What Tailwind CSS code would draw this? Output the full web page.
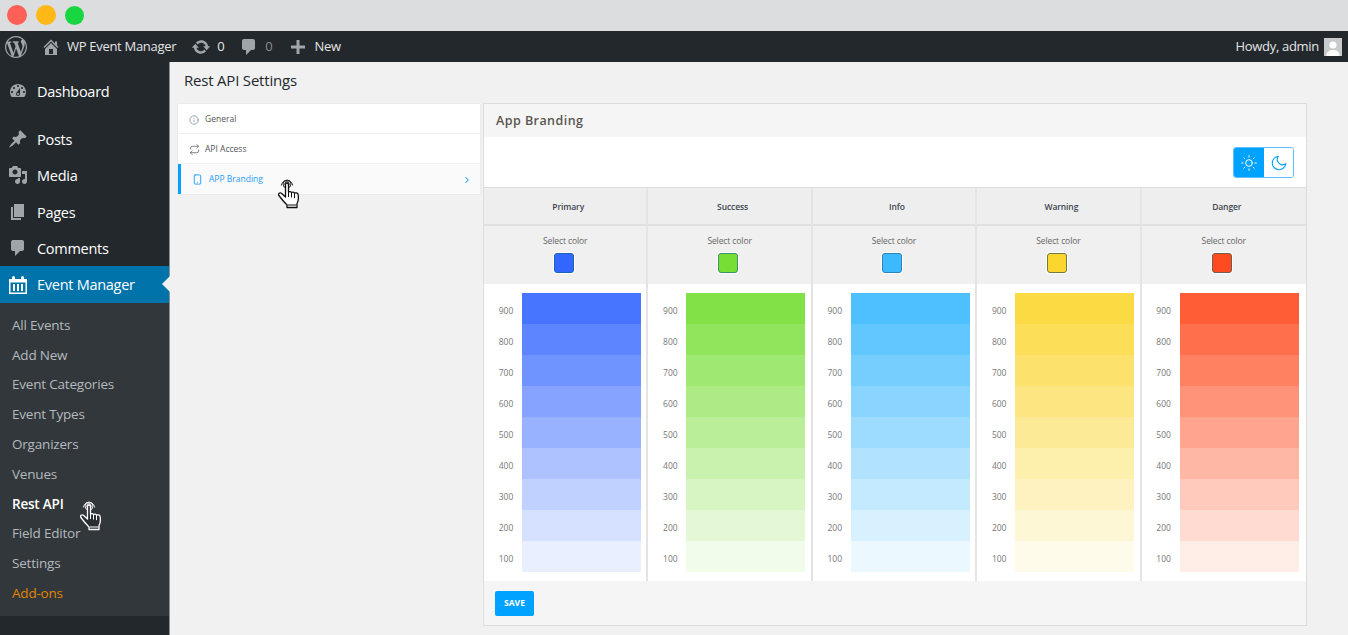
<!DOCTYPE html>
<html lang="en">
<head>
<meta charset="UTF-8">
<title>Rest API Settings</title>
<script src="https://cdn.jsdelivr.net/npm/@tailwindcss/browser@4"></script>
</head>
<body class="h-[635px] overflow-hidden bg-[#f1f1f1] font-['Open_Sans',sans-serif] text-[#444]">
<!-- window chrome -->
<div class="h-[31px] bg-[#dcddde] flex items-center gap-[9px] pl-[7px] pb-[1px]">
  <span class="w-5 h-5 rounded-full bg-[#fe5f57]"></span>
  <span class="w-5 h-5 rounded-full bg-[#ffb815]"></span>
  <span class="w-[19px] h-[19px] rounded-full bg-[#17d63f]"></span>
</div>
<!-- admin bar -->
<div class="h-[31px] bg-[#23282d] flex items-center text-[13px] tracking-[-0.3px] text-[#e4e5e6] pl-[5px] pr-[6px]">
  <svg class="w-[22px] h-[22px] fill-[#a0a5aa]" viewBox="0 0 20 20"><path d="M20 10c0-5.51-4.49-10-10-10C4.48 0 0 4.49 0 10c0 5.52 4.48 10 10 10 5.51 0 10-4.48 10-10zM7.78 15.37L4.37 6.22c.55-.02 1.17-.08 1.17-.08.5-.06.44-1.13-.06-1.11 0 0-1.45.11-2.37.11-.18 0-.37 0-.58-.01C4.12 2.69 6.87 1.11 10 1.11c2.33 0 4.45.87 6.05 2.34-.68-.11-1.65.39-1.65 1.58 0 .74.45 1.36.9 2.1.35.61.55 1.36.55 2.46 0 1.49-1.4 5-1.4 5l-3.03-8.37c.54-.02.82-.17.82-.17.5-.05.44-1.25-.06-1.22 0 0-1.44.12-2.38.12-.87 0-2.33-.12-2.33-.12-.5-.03-.56 1.2-.06 1.22l.92.08 1.26 3.41zM17.41 10c.24-.64.74-1.87.43-4.25.7 1.29 1.05 2.71 1.05 4.25 0 3.29-1.73 6.24-4.4 7.78.97-2.59 1.94-5.2 2.92-7.78zM6.1 18.09C3.12 16.65 1.11 13.53 1.11 10c0-1.3.23-2.48.72-3.59C3.25 10.3 4.67 14.2 6.1 18.09zm4.03-6.63l2.58 6.98c-.86.29-1.76.45-2.71.45-.79 0-1.57-.11-2.29-.33.81-2.38 1.62-4.74 2.42-7.1z"/></svg>
  <svg class="w-5 h-5 ml-[14px] fill-[#a0a5aa]" viewBox="0 0 20 20"><path d="M16 8.5l1.53 1.53-1.06 1.06L10 4.62l-6.47 6.47-1.06-1.06L10 2.5l4 4v-2h2v4zm-6-2.46l6 5.99V18H4v-5.97zM12 17v-5H8v5h4z"/></svg>
  <span class="ml-[6px]">WP Event Manager</span>
  <svg class="w-5 h-5 ml-[15px] fill-[#a0a5aa]" viewBox="0 0 20 20"><path d="M10.2 3.28c3.53 0 6.43 2.61 6.92 6h2.08l-3.5 4-3.5-4h2.32c-.45-1.97-2.21-3.45-4.32-3.45-1.45 0-2.73.71-3.54 1.78L4.95 5.66C6.23 4.2 8.11 3.28 10.2 3.28zm-.4 13.44c-3.52 0-6.43-2.61-6.92-6H.8l3.5-4c1.17 1.33 2.33 2.67 3.5 4H5.48c.45 1.97 2.21 3.45 4.32 3.45 1.45 0 2.73-.71 3.54-1.78l1.71 1.95c-1.28 1.46-3.15 2.38-5.25 2.38z"/></svg>
  <span class="ml-[6px]">0</span>
  <svg class="w-5 h-5 ml-[15px] fill-[#a0a5aa]" viewBox="0 0 20 20"><path d="M5 2h9c1.1 0 2 .9 2 2v7c0 1.1-.9 2-2 2h-2l-5 5v-5H5c-1.1 0-2-.9-2-2V4c0-1.1.9-2 2-2z"/></svg>
  <span class="ml-[6px] text-[#8a8f94]">0</span>
  <svg class="w-5 h-5 ml-[16px] fill-[#a0a5aa]" viewBox="0 0 20 20"><path d="M17 8.5v3h-5.5V17h-3v-5.5H3v-3h5.5V3h3v5.5z"/></svg>
  <span class="ml-[6px]">New</span>
  <span class="ml-auto">Howdy, admin</span>
  <span class="ml-[5px] w-[18px] h-[18px] bg-[#c9cacb] flex items-end justify-center overflow-hidden">
    <svg class="w-[16px] h-[16px] fill-white" viewBox="0 0 16 16"><circle cx="8" cy="5" r="3.6"/><path d="M1.5 16c0-4 2.5-6 6.5-6s6.5 2 6.5 6z"/></svg>
  </span>
</div>
<div class="flex h-[573px]">
  <!-- sidebar -->
  <aside class="w-[170px] shrink-0 bg-[#23282d] border-r border-[#8d8f91] text-white text-[14.5px] tracking-[-0.27px] flex flex-col">
    <a class="h-[36px] mt-[11px] flex items-center gap-[9px] pl-[8px]">
      <svg class="w-5 h-5 fill-[#a0a5aa]" viewBox="0 0 20 20"><path d="M3.76 16h12.48c1.1-1.37 1.76-3.11 1.76-5 0-4.42-3.58-8-8-8s-8 3.58-8 8c0 1.89.66 3.63 1.76 5zM10 4c.55 0 1 .45 1 1s-.45 1-1 1-1-.45-1-1 .45-1 1-1zM6 6c.55 0 1 .45 1 1s-.45 1-1 1-1-.45-1-1 .45-1 1-1zm8 0c.55 0 1 .45 1 1s-.45 1-1 1-1-.45-1-1 .45-1 1-1zm-5.37 5.55L12 7v6c0 1.1-.9 2-2 2s-2-.9-2-2c0-.57.24-1.08.63-1.45zM4 10c.55 0 1 .45 1 1s-.45 1-1 1-1-.45-1-1 .45-1 1-1zm12 0c.55 0 1 .45 1 1s-.45 1-1 1-1-.45-1-1 .45-1 1-1zm-5 3c0-.55-.45-1-1-1s-1 .45-1 1 .45 1 1 1 1-.45 1-1z"/></svg>
      <span class="pt-[2px]">Dashboard</span>
    </a>
    <a class="h-[36px] mt-[12px] flex items-center gap-[9px] pl-[8px]">
      <svg class="w-5 h-5 fill-[#a0a5aa]" viewBox="0 0 20 20"><path d="M10.44 3.02l1.82-1.82 6.36 6.35-1.83 1.82c-1.05-.68-2.48-.57-3.41.36l-.75.75c-.92.93-1.04 2.35-.35 3.41l-1.83 1.82-2.41-2.41-2.8 2.79c-.42.42-3.38 2.71-3.8 2.29s1.86-3.39 2.28-3.81l2.79-2.79L4.1 9.36l1.83-1.82c1.05.69 2.48.57 3.4-.36l.75-.75c.93-.92 1.05-2.35.36-3.41z"/></svg>
      <span class="pt-[2px]">Posts</span>
    </a>
    <a class="h-[36px] flex items-center gap-[9px] pl-[8px]">
      <svg class="w-5 h-5 fill-[#a0a5aa]" viewBox="0 0 20 20"><path d="M13 11V4c0-.55-.45-1-1-1h-1.67L9 1H5L3.67 3H2c-.55 0-1 .45-1 1v7c0 .55.45 1 1 1h10c.55 0 1-.45 1-1zM7 4.5c1.38 0 2.5 1.12 2.5 2.5S8.38 9.5 7 9.5 4.5 8.38 4.5 7 5.62 4.5 7 4.5zM14 6h5v10.5c0 1.38-1.12 2.5-2.5 2.5S14 17.88 14 16.5s1.12-2.5 2.5-2.5c.17 0 .34.02.5.05V9h-3V6zm-4 8.05V13h2v3.5c0 1.38-1.12 2.5-2.5 2.5S7 17.88 7 16.5 8.12 14 9.5 14c.17 0 .34.02.5.05z"/></svg>
      <span class="pt-[2px]">Media</span>
    </a>
    <a class="h-[36px] mt-[1px] flex items-center gap-[9px] pl-[8px]">
      <svg class="w-5 h-5 fill-[#a0a5aa]" viewBox="0 0 20 20"><path d="M6 15V2h10v13H6zm-1 1h8v2H3V5h2v11z"/></svg>
      <span class="pt-[2px]">Pages</span>
    </a>
    <a class="h-[36px] flex items-center gap-[9px] pl-[8px]">
      <svg class="w-5 h-5 fill-[#a0a5aa]" viewBox="0 0 20 20"><path d="M5 2h9c1.1 0 2 .9 2 2v7c0 1.1-.9 2-2 2h-2l-5 5v-5H5c-1.1 0-2-.9-2-2V4c0-1.1.9-2 2-2z"/></svg>
      <span class="pt-[2px]">Comments</span>
    </a>
    <a class="relative h-[37px] flex items-center gap-[9px] pl-[8px] bg-[#0073aa]">
      <svg class="w-5 h-5 fill-white" viewBox="0 0 20 20"><path fill-rule="evenodd" d="M1 4h3V2.5a1.5 1.5 0 0 1 3 0V4h6V2.5a1.5 1.5 0 0 1 3 0V4h3v15H1zM2.5 7.5V17.5h15V7.5zM5 9h2v7H5zM9 9h2v7H9zM13 9h2v7h-2z"/></svg>
      <span>Event Manager</span>
      <span class="absolute right-[-1px] top-[10px] w-0 h-0 border-y-[8px] border-y-transparent border-r-[8px] border-r-[#f1f1f1]"></span>
    </a>
    <ul class="bg-[#32373c] h-[313px] pt-[7px] text-[13.5px] tracking-[-0.2px] text-[#b4b9be]">
      <li class="h-[29.8px] pl-[12px] flex items-center">All Events</li>
      <li class="h-[29.8px] pl-[12px] flex items-center">Add New</li>
      <li class="h-[29.8px] pl-[12px] flex items-center">Event Categories</li>
      <li class="h-[29.8px] pl-[12px] flex items-center">Event Types</li>
      <li class="h-[29.8px] pl-[12px] flex items-center">Organizers</li>
      <li class="h-[29.8px] pl-[12px] flex items-center">Venues</li>
      <li class="h-[29.8px] pl-[12px] flex items-center font-semibold text-white">Rest API</li>
      <li class="h-[29.8px] pl-[12px] flex items-center">Field Editor</li>
      <li class="h-[29.8px] pl-[12px] flex items-center">Settings</li>
      <li class="h-[29.8px] pl-[12px] flex items-center text-[#e08500]">Add-ons</li>
    </ul>
  </aside>
  <!-- content -->
  <main class="flex-1 pl-[8px]">
    <h1 class="h-[41px] pl-[6px] pt-[7px] text-[15px] tracking-[-0.2px] leading-[22px] font-medium text-[#23282d]">Rest API Settings</h1>
    <div class="flex items-start gap-[3px]">
      <nav class="w-[302px] mt-[1px] text-[8.5px] text-[#555] shadow-[0_0_1px_#ccc]">
        <a class="h-[29px] pt-[2px] bg-white flex items-center pl-[11px] gap-[6px] mb-[1px]">
          <svg class="w-[10px] h-[10px] stroke-[#7d93a8] fill-none" stroke-width="2" viewBox="0 0 24 24" stroke-linecap="round"><circle cx="12" cy="12" r="10"/><path d="M12 16v-4M12 8h.01"/></svg>
          <span>General</span>
        </a>
        <a class="h-[29px] pt-[2px] bg-white flex items-center pl-[11px] gap-[5px] mb-[1px]">
          <svg class="w-[11px] h-[11px] stroke-[#777] fill-none" stroke-width="2" viewBox="0 0 24 24" stroke-linecap="round" stroke-linejoin="round"><path d="M17 1l4 4-4 4"/><path d="M3 11V9a4 4 0 0 1 4-4h14"/><path d="M7 23l-4-4 4-4"/><path d="M21 13v2a4 4 0 0 1-4 4H3"/></svg>
          <span>API Access</span>
        </a>
        <a class="h-[30px] pt-[1px] bg-[#fafafa] border-l-[3px] border-[#00a2ff] flex items-center pl-[11px] pr-[8px] gap-[6px] text-[#1e9dfb]">
          <svg class="w-[11px] h-[11px] stroke-[#1e9dfb] fill-none" stroke-width="2" viewBox="0 0 24 24" stroke-linecap="round" stroke-linejoin="round"><rect x="5" y="2" width="14" height="20" rx="2"/><path d="M12 18h.01"/></svg>
          <span class="font-medium">APP Branding</span>
          <svg class="ml-auto w-[10px] h-[10px] stroke-[#1e9dfb] fill-none" stroke-width="2.5" viewBox="0 0 24 24" stroke-linecap="round" stroke-linejoin="round"><path d="M9 18l6-6-6-6"/></svg>
        </a>
      </nav>
      <section class="w-[824px] h-[523px] border border-[#dcdcdc] flex flex-col">
        <h2 class="h-[33px] shrink-0 bg-[#f5f5f5] pl-[12px] pt-[1px] flex items-center text-[12.5px] font-semibold tracking-[0.45px] text-[#5a5550]">App Branding</h2>
        <div class="h-[51px] shrink-0 bg-white border-b border-[#dcdcdc] flex items-center justify-end pr-[12px] pt-[1px]">
          <div class="flex h-[31px] rounded-[3px] border border-[#5cbfff] overflow-hidden">
            <span class="w-[30px] bg-[#00a2ff] flex items-center justify-center">
              <svg class="w-4 h-4 stroke-white fill-none" stroke-width="1.5" viewBox="0 0 24 24" stroke-linecap="round"><circle cx="12" cy="12" r="5"/><path d="M12 1v2M12 21v2M4.22 4.22l1.42 1.42M18.36 18.36l1.42 1.42M1 12h2M21 12h2M4.22 19.78l1.42-1.42M18.36 5.64l1.42-1.42"/></svg>
            </span>
            <span class="w-[29px] bg-white flex items-center justify-center">
              <svg class="w-[18px] h-[18px] stroke-[#00a2ff] fill-none" stroke-width="1.5" viewBox="0 0 24 24" stroke-linejoin="round"><path d="M21 12.79A9 9 0 1 1 11.21 3 7 7 0 0 0 21 12.79z"/></svg>
            </span>
          </div>
        </div>
        <div class="grid grid-cols-5 h-[393px] shrink-0 bg-white">
          <!-- Primary -->
          <div class="border-r-2 border-[#e4e4e4]">
            <div class="h-[38px] pt-[3px] bg-[#eee] border-b-2 border-[#e0e0e0] flex items-center justify-center pl-[6px] text-[8.5px] tracking-[-0.1px] font-semibold text-[#3f4650]">Primary</div>
            <div class="h-[58px] bg-[#f0f0f0] flex flex-col items-center gap-[5px] pt-[8px] text-[8.5px] tracking-[-0.1px] leading-[14px] text-[#666]">
              <span>Select color</span>
              <span class="w-[20px] h-[20px] mr-[3px] rounded-[3px] bg-[#3366ff] border border-[#1f63b5] shadow-[0_0_0_1px_#fff]"></span>
            </div>
            <div class="flex pl-[14px] pt-[9px] gap-[8px]">
              <ul class="w-[16px] pt-[3px] text-[8.5px] text-[#777] text-center">
                <li class="h-[31px] flex items-center justify-center">900</li><li class="h-[31px] flex items-center justify-center">800</li><li class="h-[31px] flex items-center justify-center">700</li><li class="h-[31px] flex items-center justify-center">600</li><li class="h-[31px] flex items-center justify-center">500</li><li class="h-[31px] flex items-center justify-center">400</li><li class="h-[31px] flex items-center justify-center">300</li><li class="h-[31px] flex items-center justify-center">200</li><li class="h-[31px] flex items-center justify-center">100</li>
              </ul>
              <div class="w-[119px]">
                <div class="h-[31px] bg-[#3366ff]/90"></div><div class="h-[31px] bg-[#3366ff]/80"></div><div class="h-[31px] bg-[#3366ff]/70"></div><div class="h-[31px] bg-[#3366ff]/60"></div><div class="h-[31px] bg-[#3366ff]/50"></div><div class="h-[31px] bg-[#3366ff]/40"></div><div class="h-[31px] bg-[#3366ff]/30"></div><div class="h-[31px] bg-[#3366ff]/20"></div><div class="h-[31px] bg-[#3366ff]/10"></div>
              </div>
            </div>
          </div>
          <!-- Success -->
          <div class="border-r-2 border-[#e4e4e4]">
            <div class="h-[38px] pt-[3px] bg-[#eee] border-b-2 border-[#e0e0e0] flex items-center justify-center pl-[6px] text-[8.5px] tracking-[-0.1px] font-semibold text-[#3f4650]">Success</div>
            <div class="h-[58px] bg-[#f0f0f0] flex flex-col items-center gap-[5px] pt-[8px] text-[8.5px] tracking-[-0.1px] leading-[14px] text-[#666]">
              <span>Select color</span>
              <span class="w-[20px] h-[20px] mr-[3px] rounded-[3px] bg-[#76de34] border border-[#3f8f6a] shadow-[0_0_0_1px_#fff]"></span>
            </div>
            <div class="flex pl-[14px] pt-[9px] gap-[8px]">
              <ul class="w-[16px] pt-[3px] text-[8.5px] text-[#777] text-center">
                <li class="h-[31px] flex items-center justify-center">900</li><li class="h-[31px] flex items-center justify-center">800</li><li class="h-[31px] flex items-center justify-center">700</li><li class="h-[31px] flex items-center justify-center">600</li><li class="h-[31px] flex items-center justify-center">500</li><li class="h-[31px] flex items-center justify-center">400</li><li class="h-[31px] flex items-center justify-center">300</li><li class="h-[31px] flex items-center justify-center">200</li><li class="h-[31px] flex items-center justify-center">100</li>
              </ul>
              <div class="w-[119px]">
                <div class="h-[31px] bg-[#76de34]/90"></div><div class="h-[31px] bg-[#76de34]/80"></div><div class="h-[31px] bg-[#76de34]/70"></div><div class="h-[31px] bg-[#76de34]/60"></div><div class="h-[31px] bg-[#76de34]/50"></div><div class="h-[31px] bg-[#76de34]/40"></div><div class="h-[31px] bg-[#76de34]/30"></div><div class="h-[31px] bg-[#76de34]/20"></div><div class="h-[31px] bg-[#76de34]/10"></div>
              </div>
            </div>
          </div>
          <!-- Info -->
          <div class="border-r-2 border-[#e4e4e4]">
            <div class="h-[38px] pt-[3px] bg-[#eee] border-b-2 border-[#e0e0e0] flex items-center justify-center pl-[6px] text-[8.5px] tracking-[-0.1px] font-semibold text-[#3f4650]">Info</div>
            <div class="h-[58px] bg-[#f0f0f0] flex flex-col items-center gap-[5px] pt-[8px] text-[8.5px] tracking-[-0.1px] leading-[14px] text-[#666]">
              <span>Select color</span>
              <span class="w-[20px] h-[20px] mr-[3px] rounded-[3px] bg-[#3cb9ff] border border-[#2c86b5] shadow-[0_0_0_1px_#fff]"></span>
            </div>
            <div class="flex pl-[14px] pt-[9px] gap-[8px]">
              <ul class="w-[16px] pt-[3px] text-[8.5px] text-[#777] text-center">
                <li class="h-[31px] flex items-center justify-center">900</li><li class="h-[31px] flex items-center justify-center">800</li><li class="h-[31px] flex items-center justify-center">700</li><li class="h-[31px] flex items-center justify-center">600</li><li class="h-[31px] flex items-center justify-center">500</li><li class="h-[31px] flex items-center justify-center">400</li><li class="h-[31px] flex items-center justify-center">300</li><li class="h-[31px] flex items-center justify-center">200</li><li class="h-[31px] flex items-center justify-center">100</li>
              </ul>
              <div class="w-[119px]">
                <div class="h-[31px] bg-[#3cb9ff]/90"></div><div class="h-[31px] bg-[#3cb9ff]/80"></div><div class="h-[31px] bg-[#3cb9ff]/70"></div><div class="h-[31px] bg-[#3cb9ff]/60"></div><div class="h-[31px] bg-[#3cb9ff]/50"></div><div class="h-[31px] bg-[#3cb9ff]/40"></div><div class="h-[31px] bg-[#3cb9ff]/30"></div><div class="h-[31px] bg-[#3cb9ff]/20"></div><div class="h-[31px] bg-[#3cb9ff]/10"></div>
              </div>
            </div>
          </div>
          <!-- Warning -->
          <div class="border-r-2 border-[#e4e4e4]">
            <div class="h-[38px] pt-[3px] bg-[#eee] border-b-2 border-[#e0e0e0] flex items-center justify-center pl-[6px] text-[8.5px] tracking-[-0.1px] font-semibold text-[#3f4650]">Warning</div>
            <div class="h-[58px] bg-[#f0f0f0] flex flex-col items-center gap-[5px] pt-[8px] text-[8.5px] tracking-[-0.1px] leading-[14px] text-[#666]">
              <span>Select color</span>
              <span class="w-[20px] h-[20px] mr-[3px] rounded-[3px] bg-[#fbd62f] border border-[#6d7a3a] shadow-[0_0_0_1px_#fff]"></span>
            </div>
            <div class="flex pl-[14px] pt-[9px] gap-[8px]">
              <ul class="w-[16px] pt-[3px] text-[8.5px] text-[#777] text-center">
                <li class="h-[31px] flex items-center justify-center">900</li><li class="h-[31px] flex items-center justify-center">800</li><li class="h-[31px] flex items-center justify-center">700</li><li class="h-[31px] flex items-center justify-center">600</li><li class="h-[31px] flex items-center justify-center">500</li><li class="h-[31px] flex items-center justify-center">400</li><li class="h-[31px] flex items-center justify-center">300</li><li class="h-[31px] flex items-center justify-center">200</li><li class="h-[31px] flex items-center justify-center">100</li>
              </ul>
              <div class="w-[119px]">
                <div class="h-[31px] bg-[#fbd62f]/90"></div><div class="h-[31px] bg-[#fbd62f]/80"></div><div class="h-[31px] bg-[#fbd62f]/70"></div><div class="h-[31px] bg-[#fbd62f]/60"></div><div class="h-[31px] bg-[#fbd62f]/50"></div><div class="h-[31px] bg-[#fbd62f]/40"></div><div class="h-[31px] bg-[#fbd62f]/30"></div><div class="h-[31px] bg-[#fbd62f]/20"></div><div class="h-[31px] bg-[#fbd62f]/10"></div>
              </div>
            </div>
          </div>
          <!-- Danger -->
          <div>
            <div class="h-[38px] pt-[3px] bg-[#eee] border-b-2 border-[#e0e0e0] flex items-center justify-center pl-[6px] text-[8.5px] tracking-[-0.1px] font-semibold text-[#3f4650]">Danger</div>
            <div class="h-[58px] bg-[#f0f0f0] flex flex-col items-center gap-[5px] pt-[8px] text-[8.5px] tracking-[-0.1px] leading-[14px] text-[#666]">
              <span>Select color</span>
              <span class="w-[20px] h-[20px] mr-[3px] rounded-[3px] bg-[#ff4b1f] border border-[#7a5a50] shadow-[0_0_0_1px_#fff]"></span>
            </div>
            <div class="flex pl-[14px] pt-[9px] gap-[8px]">
              <ul class="w-[16px] pt-[3px] text-[8.5px] text-[#777] text-center">
                <li class="h-[31px] flex items-center justify-center">900</li><li class="h-[31px] flex items-center justify-center">800</li><li class="h-[31px] flex items-center justify-center">700</li><li class="h-[31px] flex items-center justify-center">600</li><li class="h-[31px] flex items-center justify-center">500</li><li class="h-[31px] flex items-center justify-center">400</li><li class="h-[31px] flex items-center justify-center">300</li><li class="h-[31px] flex items-center justify-center">200</li><li class="h-[31px] flex items-center justify-center">100</li>
              </ul>
              <div class="w-[119px]">
                <div class="h-[31px] bg-[#ff4b1f]/90"></div><div class="h-[31px] bg-[#ff4b1f]/80"></div><div class="h-[31px] bg-[#ff4b1f]/70"></div><div class="h-[31px] bg-[#ff4b1f]/60"></div><div class="h-[31px] bg-[#ff4b1f]/50"></div><div class="h-[31px] bg-[#ff4b1f]/40"></div><div class="h-[31px] bg-[#ff4b1f]/30"></div><div class="h-[31px] bg-[#ff4b1f]/20"></div><div class="h-[31px] bg-[#ff4b1f]/10"></div>
              </div>
            </div>
          </div>
        </div>
        <div class="flex-1 bg-[#f5f5f5] pl-[11px] pt-[10px]">
          <button class="block w-[39px] h-[25px] rounded-[2px] bg-[#00a2ff] text-white text-[8.5px] font-bold">SAVE</button>
        </div>
      </section>
    </div>
  </main>
</div>
<!-- pointer cursors -->
<svg class="absolute left-[278px] top-[178px] w-[23px] h-[31px]" viewBox="0 0 23 31"><g fill="none" stroke="#111" stroke-width=".9"><circle cx="9" cy="6" r="2.2"/><circle cx="9" cy="6" r="4"/><path d="M3.3 7.5a5.8 5.8 0 0 1 11.4 0"/></g><path d="M7.5 6.5a1.5 1.5 0 0 1 3 0V14c1-.6 2.5-.5 3 .5 1-.6 2.5-.4 3 .6 1-.5 3-.2 3.5 1 .8 3.5.3 7-1 9.4v4H9v-2.5C6.5 24.5 3.5 21 .9 17.5c-1.1-1.6.9-3.4 2.5-2.2l4.1 3.7z" fill="#fff" stroke="#111" stroke-width="1.3" stroke-linejoin="round"/><path d="M10.5 14v5M13.5 14.5v5M16.5 15.1v5M9.5 27h9" fill="none" stroke="#111" stroke-width="1"/></svg>
<svg class="absolute left-[80px] top-[500px] w-[23px] h-[31px]" viewBox="0 0 23 31"><g fill="none" stroke="#fff" stroke-width=".9"><circle cx="9" cy="6" r="2.2"/><circle cx="9" cy="6" r="4"/><path d="M3.3 7.5a5.8 5.8 0 0 1 11.4 0"/></g><path d="M7.5 6.5a1.5 1.5 0 0 1 3 0V14c1-.6 2.5-.5 3 .5 1-.6 2.5-.4 3 .6 1-.5 3-.2 3.5 1 .8 3.5.3 7-1 9.4v4H9v-2.5C6.5 24.5 3.5 21 .9 17.5c-1.1-1.6.9-3.4 2.5-2.2l4.1 3.7z" fill="#2b2f33" stroke="#fff" stroke-width="1.3" stroke-linejoin="round"/><path d="M10.5 14v5M13.5 14.5v5M16.5 15.1v5M9.5 27h9" fill="none" stroke="#fff" stroke-width="1"/></svg>
</body>
</html>
